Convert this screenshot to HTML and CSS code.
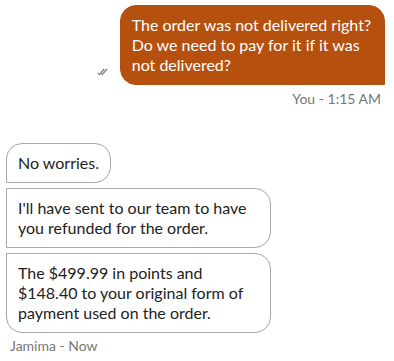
FILE: index.html
```html
<!DOCTYPE html>
<html>
<head>
<meta charset="utf-8">
<link rel="stylesheet" href="styles.css">
</head>
<body>
<div class="chat">
  <div class="group out">
    <div class="row">
      <svg class="check" width="12" height="8" viewBox="0 0 12 8" aria-hidden="true">
        <path d="M0.8 4.8 L2.4 6.6 L7.2 1" fill="none" stroke="#7a7a7a" stroke-width="1.2"/>
        <path d="M4.2 5.6 L5.2 6.6 L10 1" fill="none" stroke="#7a7a7a" stroke-width="1.2"/>
      </svg>
      <div class="bubble bubble-out">The order was not delivered right? Do we need to pay for it if it was not delivered?</div>
    </div>
    <div class="meta meta-out">You - 1:15 AM</div>
  </div>
  <div class="group in">
    <div class="bubble bubble-in first">No worries.</div>
    <div class="bubble bubble-in middle">I'll have sent to our team to have you refunded for the order.</div>
    <div class="bubble bubble-in last">The $499.99 in points and $148.40 to your original form of payment used on the order.</div>
    <div class="meta meta-in">Jamima - Now</div>
  </div>
</div>
</body>
</html>
```
FILE: styles.css
```css
html, body {
  margin: 0;
  padding: 0;
  background: #ffffff;
}
body {
  font-family: Lato, "Liberation Sans", sans-serif;
  font-size: 16px;
  line-height: 20px;
  color: #222222;
}
.chat {
  display: flex;
  flex-direction: column;
  padding: 5px 9px 0 6px;
}
.group {
  display: flex;
  flex-direction: column;
}
.group.out {
  align-items: flex-end;
}
.group.in {
  align-items: flex-start;
  margin-top: 34px;
  gap: 5px;
}
.row {
  display: flex;
  align-items: flex-end;
  justify-content: flex-end;
  gap: 11px;
  width: 100%;
}
.check {
  margin-bottom: 9px;
  flex: none;
}
.bubble {
  box-sizing: border-box;
  max-width: 70%;
  padding: 9px 11px;
  border: 1px solid #a8a8a8;
  border-radius: 16px;
}
.bubble-out {
  background: #b5500f;
  border-color: #b5500f;
  color: #ffffff;
  border-bottom-right-radius: 0;
}
.bubble-in {
  background: #ffffff;
}
.bubble-in.first {
  border-bottom-left-radius: 0;
}
.bubble-in.middle {
  border-top-left-radius: 0;
  border-bottom-left-radius: 0;
}
.bubble-in.last {
  border-top-left-radius: 0;
}
.meta {
  font-size: 14px;
  line-height: 20px;
  color: #777777;
}
.meta-out {
  margin-top: 4px;
  margin-right: 4px;
}
.meta-in {
  margin-left: 4px;
  margin-top: -2px;
}
```
